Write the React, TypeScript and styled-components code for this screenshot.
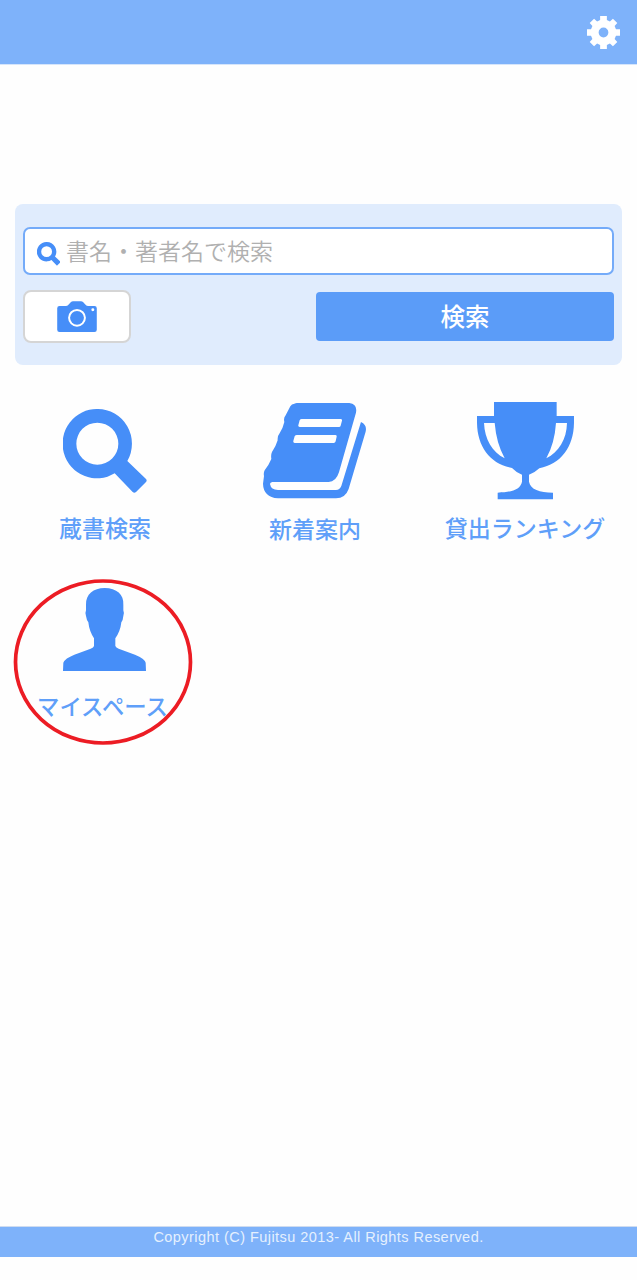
import React from "react";
import styled, { createGlobalStyle } from "styled-components";

const GlobalStyle = createGlobalStyle`
  * { box-sizing: border-box; }
  body {
    margin: 0;
    background: #fefefe;
    font-family: "Noto Sans CJK JP", sans-serif;
  }
  button, input { font-family: inherit; margin: 0; }
`;

const Page = styled.div`
  height: 1280px;
  display: flex;
  flex-direction: column;
  overflow: hidden;
`;

const Header = styled.header`
  height: 65px;
  flex: none;
  display: flex;
  justify-content: flex-end;
  padding: 16px 17.5px 0 0;
  background: #7eb2fa;
  border-bottom: 1px solid #d5e5fb;
`;

const HeaderButton = styled.button`
  width: 33px;
  height: 33px;
  padding: 0;
  border: 0;
  background: none;
  color: #fff;
`;

const Icon = styled.svg<{ $w: number; $h: number }>`
  display: block;
  flex: none;
  width: ${(p) => p.$w}px;
  height: ${(p) => p.$h}px;
  fill: currentColor;
`;

const SearchPanel = styled.form`
  flex: none;
  height: 161px;
  margin: 139px 15px 0;
  padding: 23px 8px 0;
  border-radius: 8px;
  background: #e0ecfd;
`;

const SearchField = styled.label`
  display: flex;
  height: 48px;
  padding: 13px 12px 0 11.5px;
  border: 2px solid #74abf9;
  border-radius: 7px;
  background: #fff;
  color: #468ef8;
`;

const SearchInput = styled.input`
  flex: 1;
  min-width: 0;
  height: 34px;
  margin: -9px 0 0 6px;
  padding: 0;
  border: 0;
  outline: 0;
  background: none;
  font-size: 23px;
  font-weight: 350;
  &::placeholder { color: #b0b0b0; opacity: 1; }
`;

const Actions = styled.div`
  display: flex;
  justify-content: space-between;
  align-items: center;
  margin-top: 15px;
`;

const CameraButton = styled.button`
  display: flex;
  align-items: center;
  justify-content: center;
  width: 108px;
  height: 53px;
  padding: 0;
  border: 2px solid #d5d5d5;
  border-radius: 8px;
  background: #fff;
  color: #468ef8;
`;

const SubmitButton = styled.button`
  width: 298px;
  height: 49px;
  padding: 0 0 1px;
  border: 0;
  border-radius: 4px;
  background: #5b9cf8;
  color: #fff;
  font-size: 24.5px;
  line-height: 48px;
  font-weight: 500;
`;

const Menu = styled.nav`
  flex: 1;
  display: grid;
  grid-template-columns: repeat(3, 210px);
  grid-template-rows: 178px 178px;
  padding-top: 37px;
`;

const MenuItem = styled.a`
  position: relative;
  display: flex;
  flex-direction: column;
  align-items: center;
  color: #468ef8;
`;

const IconSlot = styled.div`
  display: flex;
  height: 98px;
  align-items: center;
`;

const MenuLabel = styled.span<{ $size?: number; $drop?: number; $inset?: number }>`
  margin-top: ${(p) => 9.5 + (p.$drop ?? 0)}px;
  margin-right: ${(p) => p.$inset ?? 0}px;
  font-size: ${(p) => p.$size ?? 23}px;
  line-height: 34px;
  font-weight: 500;
  white-space: nowrap;
  color: #5f9ff9;
`;

const Highlight = styled.svg`
  position: absolute;
  left: 13px;
  top: -1px;
  width: 180px;
  height: 167px;
  fill: none;
  stroke: #ec1c24;
  stroke-width: 3.7;
`;

const Footer = styled.footer`
  flex: none;
  height: 31px;
  margin-bottom: 23px;
  border-top: 1px solid #cfdcf0;
  background: #7eb2fa;
  color: #e5f0fe;
  font-family: "Liberation Sans", sans-serif;
  font-size: 14.5px;
  line-height: 20px;
  letter-spacing: 0.45px;
  text-align: center;
`;

const GearIcon = () => (
  <Icon $w={33} $h={33} viewBox="-49 -49 98 98">
    <path
      fillRule="evenodd"
      d="M-10-49H10V-37L19-33L28-41L41-28L33-19L37-10H49V10H37L33 19L41 28L28 41L19 33L10 37V49H-10V37L-19 33L-28 41L-41 28L-33 19L-37 10H-49V-10H-37L-33-19L-41-28L-28-41L-19-33L-10-37ZM0-14.500A14.500 14.500 0 1 0 0 14.500A14.500 14.500 0 1 0 0-14.500Z"
    />
  </Icon>
);

const MagnifierIcon = ({ size, hole = 63 }: { size: number; hole?: number }) => (
  <Icon $w={size} $h={size} viewBox="69 57 252 252">
    <path
      fillRule="evenodd"
      d={`M172 57A103 104 0 0 1 262 213L318 267Q322 271 318 276L288 306Q283 311 278 306L224 250A103 104 0 1 1 172 57ZM172 ${161 - hole}a${hole} ${hole} 0 1 0 0 ${hole * 2}a${hole} ${hole} 0 1 0 0 ${-hole * 2}Z`}
    />
  </Icon>
);

const CameraIcon = () => (
  <Icon $w={40} $h={31} viewBox="171 317 120 94">
    <path
      fillRule="evenodd"
      d="M178 332H197Q202 332 205 328L212 321Q215 318 219 318H243Q247 318 250 321L257 328Q260 332 265 332H284Q291 332 291 339V404Q291 411 284 411H178Q171 411 171 404V339Q171 332 178 332ZM231 341A27 27 0 1 0 231 395A27 27 0 1 0 231 341ZM279 339A4.500 4.500 0 1 0 279 348A4.500 4.500 0 1 0 279 339Z"
    />
    <circle cx="231" cy="368" r="21" />
  </Icon>
);

const BookIcon = () => (
  <Icon $w={103.300} $h={95.300} viewBox="39 39 310 286">
    <path
      fillRule="evenodd"
      d="M133 41Q141 38 149 39H298Q323 42 318 68L267 247Q258 276 236 276H67Q60 277 60 282Q63 300 84 300H258Q269 300 274 288L333 96Q352 105 347 125L296 297Q286 325 258 325H84Q40 321 39 281L42 258Q40 249 44 241Q56 226 64 207Q62 194 66 186Q77 171 83 151Q82 137 88 131Q99 115 103 96Q100 83 107 76L121 49Q125 41 133 41ZM155 87Q151 87 149 91L145 106Q144 111 149 111H267Q271 111 272 107L276 92Q277 87 272 87ZM141 135Q136 135 134 139L130 153Q129 159 134 159H251Q256 159 257 154L260 140Q261 135 256 135Z"
    />
  </Icon>
);

const TrophyIcon = () => (
  <Icon $w={97} $h={97.300} viewBox="111 36 291 292">
    <path
      fillRule="evenodd"
      d="M162 36H350V78H402V99C401 171 363 222 298 235Q286 247 267 254V275C272 299 298 307 339 308V328H173V308C215 307 241 299 246 275V254Q228 247 216 234C151 222 112 171 111 99V78H162ZM132 99C134 148 157 186 194 205Q169 160 164 99ZM348 99Q344 160 319 205C356 186 380 149 381 99Z"
    />
  </Icon>
);

const PersonIcon = () => (
  <Icon $w={84} $h={83} viewBox="189 54 252 249">
    <path d="M314 54C350 54 372 74 370 104V121Q373 127 370 138Q369 151 364 157Q361 184 346 205V228Q348 233 356 236L405 254Q434 266 437 278L438 303H189L190 278Q195 265 223 254L272 236Q281 233 282 228V205Q268 184 265 157Q260 151 258 138Q255 127 258 121V104C257 73 280 54 314 54Z" />
  </Icon>
);

export default function App() {
  return (
    <>
      <GlobalStyle />
      <Page>
        <Header>
          <HeaderButton type="button" aria-label="設定">
            <GearIcon />
          </HeaderButton>
        </Header>
        <SearchPanel>
          <SearchField>
            <MagnifierIcon size={23.500} hole={58} />
            <SearchInput placeholder="書名・著者名で検索" />
          </SearchField>
          <Actions>
            <CameraButton type="button" aria-label="カメラ">
              <CameraIcon />
            </CameraButton>
            <SubmitButton type="button">検索</SubmitButton>
          </Actions>
        </SearchPanel>
        <Menu>
          <MenuItem>
            <IconSlot>
              <MagnifierIcon size={84} />
            </IconSlot>
            <MenuLabel>蔵書検索</MenuLabel>
          </MenuItem>
          <MenuItem>
            <IconSlot>
              <BookIcon />
            </IconSlot>
            <MenuLabel $drop={1}>新着案内</MenuLabel>
          </MenuItem>
          <MenuItem>
            <IconSlot>
              <TrophyIcon />
            </IconSlot>
            <MenuLabel>貸出ランキング</MenuLabel>
          </MenuItem>
          <MenuItem>
            <IconSlot>
              <PersonIcon />
            </IconSlot>
            <MenuLabel $size={22.400} $inset={5}>マイスペース</MenuLabel>
            <Highlight viewBox="0 0 180 167">
              <ellipse cx="90" cy="83" rx="87.500" ry="81" />
            </Highlight>
          </MenuItem>
        </Menu>
        <Footer>Copyright (C) Fujitsu 2013- All Rights Reserved.</Footer>
      </Page>
    </>
  );
}
